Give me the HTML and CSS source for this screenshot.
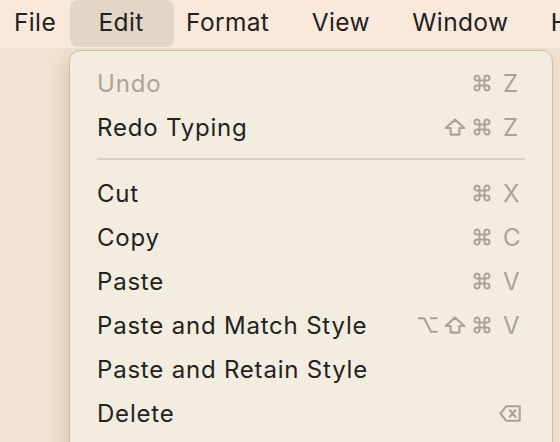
FILE: index.html
```html
<!DOCTYPE html>
<html>
<head>
<meta charset="utf-8">
<link rel="stylesheet" href="styles.css">
</head>
<body>
<div class="screen">
  <div class="menubar">
    <span class="mb-item">File</span>
    <span class="mb-item active">Edit</span>
    <span class="mb-item">Format</span>
    <span class="mb-item">View</span>
    <span class="mb-item">Window</span>
    <span class="mb-item">Help</span>
  </div>
  <div class="desk">
    <div class="menu">
      <div class="row disabled">
        <span class="label">Undo</span>
        <span class="keys">
          <svg class="ic cmd" viewBox="0 0 24 24"><path d="M15 6v12a3 3 0 1 0 3-3H6a3 3 0 1 0 3 3V6a3 3 0 1 0-3 3h12a3 3 0 1 0-3-3"/></svg>
          <span class="key">Z</span>
        </span>
      </div>
      <div class="row">
        <span class="label">Redo Typing</span>
        <span class="keys">
          <svg class="ic shift" viewBox="0 0 22 18"><path d="M11 1.6 20.4 10h-5v6.6H6.6V10h-5z"/></svg>
          <svg class="ic cmd" viewBox="0 0 24 24"><path d="M15 6v12a3 3 0 1 0 3-3H6a3 3 0 1 0 3 3V6a3 3 0 1 0-3 3h12a3 3 0 1 0-3-3"/></svg>
          <span class="key">Z</span>
        </span>
      </div>
      <div class="sep"></div>
      <div class="row">
        <span class="label">Cut</span>
        <span class="keys">
          <svg class="ic cmd" viewBox="0 0 24 24"><path d="M15 6v12a3 3 0 1 0 3-3H6a3 3 0 1 0 3 3V6a3 3 0 1 0-3 3h12a3 3 0 1 0-3-3"/></svg>
          <span class="key">X</span>
        </span>
      </div>
      <div class="row">
        <span class="label">Copy</span>
        <span class="keys">
          <svg class="ic cmd" viewBox="0 0 24 24"><path d="M15 6v12a3 3 0 1 0 3-3H6a3 3 0 1 0 3 3V6a3 3 0 1 0-3 3h12a3 3 0 1 0-3-3"/></svg>
          <span class="key">C</span>
        </span>
      </div>
      <div class="row">
        <span class="label">Paste</span>
        <span class="keys">
          <svg class="ic cmd" viewBox="0 0 24 24"><path d="M15 6v12a3 3 0 1 0 3-3H6a3 3 0 1 0 3 3V6a3 3 0 1 0-3 3h12a3 3 0 1 0-3-3"/></svg>
          <span class="key">V</span>
        </span>
      </div>
      <div class="row">
        <span class="label">Paste and Match Style</span>
        <span class="keys">
          <svg class="ic opt" viewBox="0 0 21 18"><path d="M1 2.2h6.2l6.8 13.6H20.5M13 2.2h7.5"/></svg>
          <svg class="ic shift" viewBox="0 0 22 18"><path d="M11 1.6 20.4 10h-5v6.6H6.6V10h-5z"/></svg>
          <svg class="ic cmd" viewBox="0 0 24 24"><path d="M15 6v12a3 3 0 1 0 3-3H6a3 3 0 1 0 3 3V6a3 3 0 1 0-3 3h12a3 3 0 1 0-3-3"/></svg>
          <span class="key">V</span>
        </span>
      </div>
      <div class="row">
        <span class="label">Paste and Retain Style</span>
        <span class="keys"></span>
      </div>
      <div class="row">
        <span class="label">Delete</span>
        <span class="keys">
          <svg class="ic del" viewBox="0 0 22 17"><path d="M7.2 1.3h13.5v14.4H7.2L1.4 8.5z M10.8 5.2l5.6 6.6 M16.4 5.2l-5.6 6.6"/></svg>
        </span>
      </div>
    </div>
  </div>
</div>
</body>
</html>
```

FILE: styles.css
```css
html, body {
  margin: 0;
  padding: 0;
}
body {
  width: 560px;
  height: 442px;
  overflow: hidden;
  font-family: "Inter", "Liberation Sans", sans-serif;
}
.screen {
  width: 560px;
  height: 442px;
  display: flex;
  flex-direction: column;
  background: #f3e3d2;
}
.menubar {
  height: 48px;
  flex: none;
  display: flex;
  align-items: flex-start;
  padding-left: 14px;
  gap: 42.5px;
  background: #f9e9da;
  font-size: 24.5px;
  letter-spacing: 0.35px;
  color: #222;
  white-space: nowrap;
  overflow: hidden;
}
.mb-item {
  line-height: 45px;
}
.mb-item.active {
  background: #e2d6c6;
  border-radius: 8px;
  padding: 0 30px 0 29px;
  margin: 0 -30px 0 -29px;
  height: 47px;
}
.desk {
  flex: 1;
  padding: 2px 0 0 69px;
  overflow: hidden;
}
.menu {
  width: 484px;
  height: 420px;
  background: #f3ede0;
  border: 1px solid #cbbfae;
  border-radius: 11px;
  box-shadow: -5px 6px 20px rgba(120, 85, 50, 0.2);
  padding: 10px 33px 0 27px;
  box-sizing: border-box;
  color: #222;
}
.row {
  height: 44px;
  display: flex;
  align-items: center;
  justify-content: space-between;
  font-size: 24px;
  letter-spacing: 0.8px;
}
.row.disabled .label {
  color: #aca596;
}
.keys {
  display: flex;
  align-items: center;
  gap: 6px;
  color: #aaa294;
}
.ic {
  display: block;
  fill: none;
  stroke: #aaa294;
  stroke-width: 2.1;
  stroke-linecap: round;
  stroke-linejoin: round;
}
.ic.cmd {
  width: 20px;
  height: 20px;
  stroke-width: 2.3;
}
.ic.shift {
  width: 22px;
  height: 18px;
}
.ic.opt {
  width: 21px;
  height: 18px;
  stroke-linecap: butt;
  stroke-linejoin: miter;
}
.ic.del {
  width: 22px;
  height: 17px;
  margin-right: -2px;
}
.key {
  width: 16px;
  margin-left: 5px;
  font-size: 24px;
  letter-spacing: 0;
}
.sep {
  height: 2px;
  background: #d9d1c2;
  margin: 9px -6px 11px 0;
}
```
